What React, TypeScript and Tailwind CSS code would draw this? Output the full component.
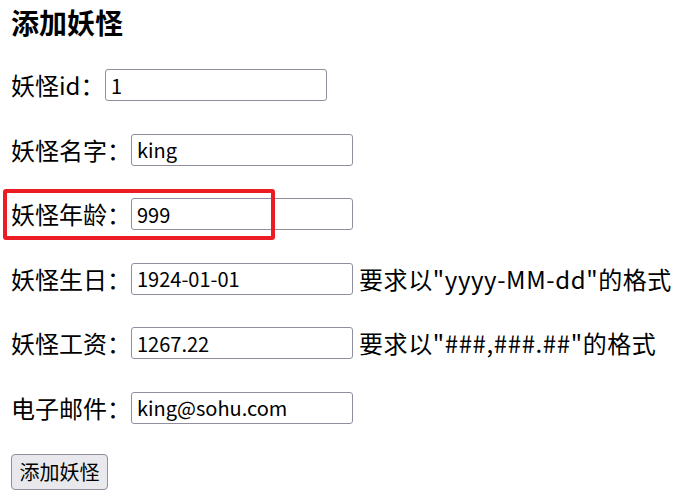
import { useState } from 'react';

const font = { fontFamily: '"Noto Sans CJK SC", "Noto Sans", sans-serif' };

interface Field {
  label: string;
  value: string;
  hint?: string;
  labelWidth?: string;
}

const fields: Field[] = [
  { label: '妖怪id：', value: '1', labelWidth: 'w-[94px]' },
  { label: '妖怪名字：', value: 'king' },
  { label: '妖怪年龄：', value: '999' },
  { label: '妖怪生日：', value: '1924-01-01', hint: '要求以"yyyy-MM-dd"的格式' },
  { label: '妖怪工资：', value: '1267.22', hint: '要求以"###,###.##"的格式' },
  { label: '电子邮件：', value: 'king@sohu.com' },
];

export default function App() {
  const [values, setValues] = useState(fields.map((f) => f.value));

  return (
    <div className="relative w-[689px] h-[500px] bg-white text-black pl-[11px] overflow-hidden" style={font}>
      {/* 标题 */}
      <h3 className="pt-[8px] h-[53px] leading-[29px] text-[28px] font-bold">添加妖怪</h3>

      {fields.map((f, i) => (
        <div key={f.label} className="flex items-center h-[64.5px] text-[24px] leading-[32px]">
          <span className={`shrink-0 whitespace-nowrap ${f.labelWidth ?? 'w-[120px]'}`}>{f.label}</span>
          <input
            value={values[i]}
            onChange={(e) => setValues(values.map((v, j) => (j === i ? e.target.value : v)))}
            className="w-[222px] h-[32px] border border-[#8f8f9d] rounded-[3px] px-[5px] text-[20px] leading-[30px] outline-none"
            style={font}
          />
          {f.hint && <span className="ml-[6px] whitespace-nowrap tracking-[0.6px]">{f.hint}</span>}
        </div>
      ))}

      <div className="flex items-center h-[64.5px]">
        <button
          className="h-[36px] w-[97px] bg-[#e9e9ed] border border-[#8f8f9d] rounded-[4px] text-[20px] leading-[34px]"
          style={font}
        >
          添加妖怪
        </button>
      </div>

      {/* 红框标注 */}
      <div className="absolute left-[3px] top-[189px] w-[272px] h-[51px] border-4 border-[#ec1c24] rounded-[3px] pointer-events-none" />
    </div>
  );
}
